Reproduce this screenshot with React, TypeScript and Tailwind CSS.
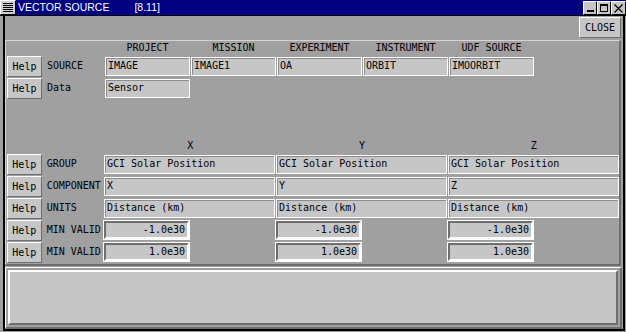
import React from 'react';

const raised =
  'bg-[#c6c6c6] border border-t-white border-l-white border-b-[#6e6e6e] border-r-[#6e6e6e]';

function HelpButton() {
  return (
    <button className={`ml-[1px] w-[35px] h-[21px] ${raised} flex items-center justify-center pt-[2px] leading-none`}>
      Help
    </button>
  );
}

function Field({ text, wide }: { text: string; wide?: boolean }) {
  return (
    <div
      className={`${wide ? 'w-[171px]' : 'w-[85px]'} h-[19px] bg-[#c6c6c6] border border-white shadow-[inset_1px_1px_0_#8c8c8c] pl-[2px] flex items-center whitespace-pre leading-none`}
    >
      {text}
    </div>
  );
}

function NumField({ text }: { text: string }) {
  return (
    <div className="w-[171px]">
      <div className="w-[85px] h-[18px] bg-[#c6c6c6] border-2 border-t-[#6e6e6e] border-l-[#6e6e6e] border-b-white border-r-white shadow-[0_0_0_1px_#ffffff] pr-[2px] flex items-center justify-end leading-none">
        {text}
      </div>
    </div>
  );
}

function Row({ label, children }: { label: string; children: React.ReactNode }) {
  return (
    <div className="h-[22px] flex items-center">
      <HelpButton />
      <div className="w-[63px] pl-[5px] leading-none">{label}</div>
      <div className="flex gap-[1px]">{children}</div>
    </div>
  );
}

function TitleBar() {
  return (
    <div className="h-[16px] flex bg-[#000080] border-b border-black">
      <div className="w-[16px] h-[15px] bg-[#d0d0d0] border border-t-white border-l-white border-b-black border-r-black flex items-center justify-center">
        <svg width="10" height="10" viewBox="0 0 10 10">
          {[0, 2, 4, 6, 8].map((y) => (
            <rect key={y} x="0" y={y} width="10" height="1" fill="#000" />
          ))}
        </svg>
      </div>
      <div className="flex-1 flex items-center pl-[2px] text-white text-[10.5px] leading-none font-['Liberation_Sans',Arial,sans-serif] whitespace-pre">
        <span>VECTOR SOURCE</span>
        <span className="ml-[25px]">[8.11]</span>
      </div>
      <div className="flex items-start pt-[1px] gap-0">
        <div className="w-[14px] h-[14px] bg-[#c6c6c6] border border-t-white border-l-white border-b-black border-r-black flex items-end justify-center pb-[2px]">
          <div className="w-[7px] h-[2px] bg-black" />
        </div>
        <div className="w-[14px] h-[14px] bg-[#c6c6c6] border border-t-white border-l-white border-b-black border-r-black flex items-center justify-center">
          <div className="w-[8px] h-[8px] border border-black border-t-2" />
        </div>
        <div className="w-[15px] h-[14px] bg-[#c6c6c6] border border-t-white border-l-white border-b-black border-r-black flex items-center justify-center">
          <svg width="9" height="9" viewBox="0 0 9 9">
            <path d="M0.5 0.5 L8.5 8.5 M8.5 0.5 L0.5 8.5" stroke="#000" strokeWidth="1.2" />
          </svg>
        </div>
      </div>
    </div>
  );
}

export default function App() {
  const top = ['PROJECT', 'MISSION', 'EXPERIMENT', 'INSTRUMENT', 'UDF SOURCE'];
  const xyz = ['X', 'Y', 'Z'];
  return (
    <div className="w-[626px] h-[332px] bg-[#a0a0a0] flex flex-col overflow-hidden font-['DejaVu_Sans_Mono',monospace] text-[10px] text-black">
      <TitleBar />
      <div className="flex-1 flex flex-col ml-[3px] mr-[1px] mb-[1px] border-l-2 border-r-2 border-b-2 border-black">
        <div className="h-[24px] flex justify-end items-start pt-[1px] pr-[2px]">
          <button className={`w-[42px] h-[21px] ${raised} flex items-center justify-center pt-[1px] leading-none`}>
            CLOSE
          </button>
        </div>

        <div className="h-[226px] mr-[2px] border-t border-l border-[#d4d4d4] border-b-2 border-r-2 border-b-[#6e6e6e] border-r-[#6e6e6e] flex flex-col">
          <div className="h-[14px] flex pl-[99px] gap-[1px] items-center">
            {top.map((h) => (
              <div key={h} className="w-[85px] text-center whitespace-pre leading-none">
                {h}
              </div>
            ))}
          </div>
          <Row label="SOURCE">
            <Field text="IMAGE" />
            <Field text="IMAGE1" />
            <Field text="OA" />
            <Field text="ORBIT" />
            <Field text="IMOORBIT" />
          </Row>
          <Row label="Data">
            <Field text="Sensor" />
          </Row>

          <div className="h-[40px]" />

          <div className="h-[14px] flex pl-[99px] gap-[1px] items-center">
            {xyz.map((h) => (
              <div key={h} className="w-[171px] text-center leading-none">
                {h}
              </div>
            ))}
          </div>
          <Row label="GROUP">
            <Field wide text="GCI Solar Position" />
            <Field wide text="GCI Solar Position" />
            <Field wide text="GCI Solar Position" />
          </Row>
          <Row label="COMPONENT">
            <Field wide text="X" />
            <Field wide text="Y" />
            <Field wide text="Z" />
          </Row>
          <Row label="UNITS">
            <Field wide text="Distance (km)" />
            <Field wide text="Distance (km)" />
            <Field wide text="Distance (km)" />
          </Row>
          <Row label="MIN VALID">
            <NumField text="-1.0e30" />
            <NumField text="-1.0e30" />
            <NumField text="-1.0e30" />
          </Row>
          <Row label="MIN VALID">
            <NumField text="1.0e30" />
            <NumField text="1.0e30" />
            <NumField text="1.0e30" />
          </Row>
        </div>

        <div className="flex-1 flex mt-[1px] mr-[1px] border-t border-l border-white border-b-2 border-r-2 border-b-[#6e6e6e] border-r-[#6e6e6e] p-[2px]">
          <div className="flex-1 bg-[#c6c6c6] border-2 border-t-white border-l-white border-b-[#6e6e6e] border-r-[#6e6e6e]" />
        </div>
      </div>
    </div>
  );
}
